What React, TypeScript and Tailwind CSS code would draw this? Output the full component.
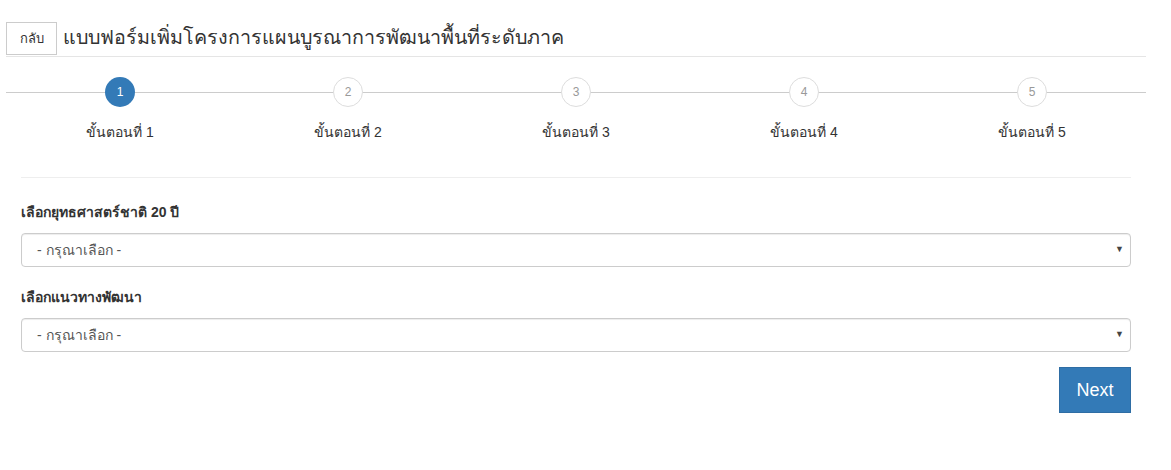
import React from 'react';

const steps = [1, 2, 3, 4, 5];

function Select({ label }: { label: string }) {
  return (
    <div>
      <div className="h-[20px] text-[14px] font-bold leading-[20px] text-[#333]">{label}</div>
      <div className="mt-[11px] flex h-[34px] items-center justify-between rounded-[4px] border border-[#ccc] bg-white pl-[15px] pr-[6px] text-[14px] text-[#555] shadow-[inset_0_1px_1px_rgba(0,0,0,0.075)]">
        <span>- กรุณาเลือก -</span>
        <span className="text-[9px] text-[#444]">▼</span>
      </div>
    </div>
  );
}

export default function App() {
  return (
    <div className="min-h-[470px] bg-white font-['Liberation_Sans',sans-serif] text-[#333]">
      <div className="ml-[6px] w-[1140px]">
        {/* Header */}
        <div className="flex h-[57px] items-end border-b border-[#e5e5e5] pb-px">
          <button className="h-[33px] w-[51px] border border-[#ccc] bg-white text-[13px] text-[#333]">กลับ</button>
          <h1 className="ml-[6px] self-center pt-[20px] text-[19.7px] text-[#333]">แบบฟอร์มเพิ่มโครงการแผนบูรณาการพัฒนาพื้นที่ระดับภาค</h1>
        </div>

        {/* Stepper */}
        <div className="relative mt-[20px]">
          <div className="absolute left-0 right-0 top-[15px] h-px bg-[#ccc]" />
          <div className="relative grid grid-cols-5">
            {steps.map((n) => (
              <div key={n} className="flex flex-col items-center">
                {n === 1 ? (
                  <div className="flex h-[30px] w-[30px] items-center justify-center rounded-full bg-[#337ab7] text-[12px] text-white">
                    {n}
                  </div>
                ) : (
                  <div className="flex h-[30px] w-[30px] items-center justify-center rounded-full border border-[#ddd] bg-white text-[12px] text-[#999]">
                    {n}
                  </div>
                )}
                <div className="mt-[15px] text-[14px] leading-[20px] text-[#333]">ขั้นตอนที่ {n}</div>
              </div>
            ))}
          </div>
        </div>

        {/* Form */}
        <div className="px-[15px]">
          <hr className="mt-[35px] border-t border-[#eee]" />
          <div className="mt-[24px]">
            <Select label="เลือกยุทธศาสตร์ชาติ 20 ปี" />
          </div>
          <div className="mt-[20px]">
            <Select label="เลือกแนวทางพัฒนา" />
          </div>
          <div className="mt-[15px] flex justify-end">
            <button className="h-[46px] w-[72px] border border-[#2e6da4] bg-[#337ab7] text-[18px] text-white">Next</button>
          </div>
        </div>
      </div>
    </div>
  );
}
